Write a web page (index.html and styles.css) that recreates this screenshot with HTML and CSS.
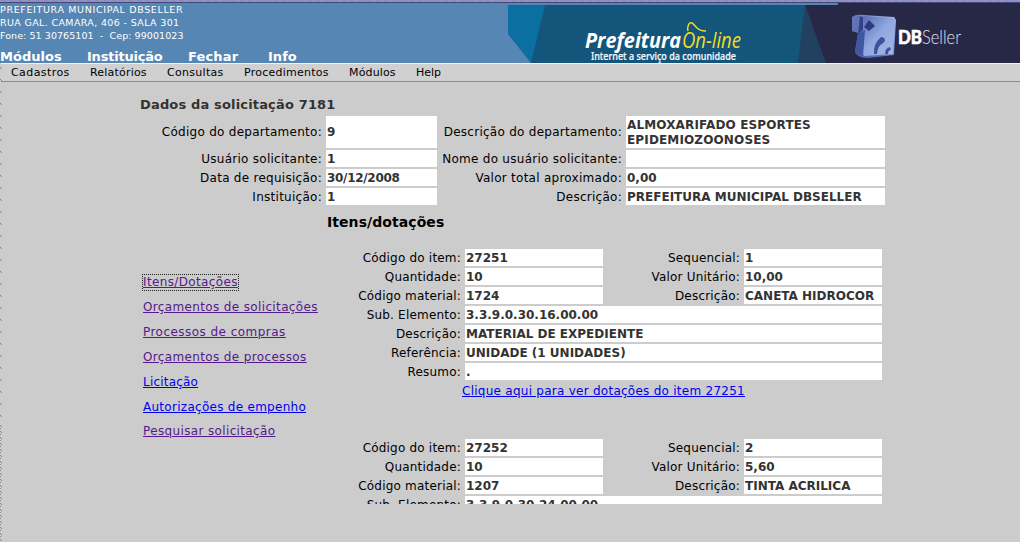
FILE: index.html
```html
<!DOCTYPE html>
<html lang="pt-BR">
<head>
<meta charset="utf-8">
<title>Prefeitura On-line</title>
<link rel="stylesheet" href="styles.css">
</head>
<body>
<header class="header">
  <div class="header-left">
    <div class="address">
      <div class="addr-name">PREFEITURA MUNICIPAL DBSELLER</div>
      <div class="addr-street">RUA GAL. CAMARA, 406 - SALA 301</div>
      <div class="addr-phone">Fone: 51 30765101 &nbsp;- &nbsp;Cep: 99001023</div>
    </div>
    <nav class="modules"><a>Módulos</a><a class="mod-inst">Instituição</a><a class="mod-close">Fechar</a><a>Info</a></nav>
  </div>
  <svg class="banner" width="512" height="60" viewBox="508 3 512 60">
    <defs>
      <linearGradient id="cube" x1="0" y1="1" x2="1" y2="0">
        <stop offset="0" stop-color="#465cab"/><stop offset=".4" stop-color="#5b78c6"/><stop offset="1" stop-color="#a9bce6"/>
      </linearGradient>
      <linearGradient id="cubeFace" x1="0" y1="0" x2="1" y2="1">
        <stop offset="0" stop-color="#5164ac"/><stop offset=".5" stop-color="#8fa8df"/><stop offset="1" stop-color="#aab7e5"/>
      </linearGradient>
    </defs>
    <rect x="508" y="5" width="330" height="58" fill="#14557c"/>
    <path d="M508 5V34L531 63L545 5Z" fill="#0b70a1"/>
    <path d="M508 34V63H531Z" fill="#5686b3"/>
    <path d="M838 3H1020V63H825L805 5H838Z" fill="#272746"/>
    <path d="M805 5L798 63H826Z" fill="#22405f"/>
    <text class="logo-bold" x="585" y="48" textLength="96" lengthAdjust="spacingAndGlyphs">Prefeitura</text>
    <text class="logo-thin" x="682" y="48" textLength="59" lengthAdjust="spacingAndGlyphs">On-line</text>
    <path d="M688 31C687 26 689 22 692 23C696 25 696 31 706 31" fill="none" stroke="#f0dd20" stroke-width="1.5"/>
    <text class="logo-tag" x="591" y="59.500" textLength="145" lengthAdjust="spacingAndGlyphs">Internet a serviço da comunidade</text>
    <path d="M852 17Q856 14 863 15L894 17L896 20L894 55L868 58Q858 58 855 52L858 33L852 31Z" fill="url(#cube)"/>
    <path d="M863 16L895 18L893 54L864 56L859 45L864 30Z" fill="url(#cubeFace)"/>
    <path d="M853 17L860 15V33L852 31Z" fill="#6273b4"/>
    <path d="M860 16L863 17V30L858 34Z" fill="#34418a"/>
    <path d="M858 34L865 30L863 56Q856 54 855 50Z" fill="#4056a0"/>
    <path d="M869 20L875 26L869 31L864 27Z" fill="#303980"/>
    <path d="M881 37Q885 37 885 41L882 44Q878 45 877 54L874 54Q873 44 881 37ZM885 54Q885 48 890 47L891 50Q888 50 888 54Z" fill="#3e529a"/>
    <text class="db" x="898" y="44" textLength="24" lengthAdjust="spacingAndGlyphs">DB</text>
    <text class="seller" x="922" y="44" textLength="39" lengthAdjust="spacingAndGlyphs">Seller</text>
  </svg>
  <svg class="top-edge" width="1020" height="3">
    <defs><pattern id="hatch" width="17" height="3" patternUnits="userSpaceOnUse"><rect width="17" height="3" fill="#8d93c7"/><path d="M2 0h2v1H2zM4 1h2v1H4zM10 0h2v1h-2zM12 1h2v1h-2z" fill="#8b8b9c"/></pattern></defs>
    <rect width="1020" height="2" fill="url(#hatch)"/><rect y="2" width="1020" height="1" fill="#45477c"/>
  </svg>
</header>
<nav class="menu"><a class="m1">Cadastros</a><a class="m2">Relatórios</a><a class="m3">Consultas</a><a class="m4">Procedimentos</a><a class="m5">Módulos</a><a>Help</a></nav>
<svg class="side-edge" width="3" height="478">
  <defs><pattern id="side" width="3" height="12" patternUnits="userSpaceOnUse"><path d="M0 3h1v1H0zM1 4h1v1H1z" fill="#858585"/></pattern>
  <pattern id="sideDense" width="3" height="6" patternUnits="userSpaceOnUse"><path d="M0 1h1v1H0zM1 2h1v1H1zM0 4h1v1H0z" fill="#858585"/></pattern></defs>
  <rect width="3" height="360" fill="url(#side)"/><rect y="360" width="3" height="118" fill="url(#sideDense)"/>
</svg>
<main class="page">
  <h1 class="title">Dados da solicitação 7181</h1>
  <section class="summary">
    <span class="label">Código do departamento:</span><b class="value">9</b>
    <span class="label">Descrição do departamento:</span><b class="value department">ALMOXARIFADO ESPORTES EPIDEMIOZOONOSES</b>
    <span class="label">Usuário solicitante:</span><b class="value">1</b>
    <span class="label">Nome do usuário solicitante:</span><b class="value"></b>
    <span class="label">Data de requisição:</span><b class="value date">30/12/2008</b>
    <span class="label">Valor total aproximado:</span><b class="value">0,00</b>
    <span class="label">Instituição:</span><b class="value">1</b>
    <span class="label">Descrição:</span><b class="value">PREFEITURA MUNICIPAL DBSELLER</b>
  </section>
  <div class="columns">
    <nav class="links">
      <a class="visited focused">Itens/Dotações</a>
      <a class="visited">Orçamentos de solicitações</a>
      <a class="visited purchases">Processos de compras</a>
      <a class="visited">Orçamentos de processos</a>
      <a class="bidding">Licitação</a>
      <a class="permits">Autorizações de empenho</a>
      <a class="visited">Pesquisar solicitação</a>
    </nav>
    <section class="items">
      <h2 class="subtitle">Itens/dotações</h2>
      <div class="item">
        <span class="label">Código do item:</span><b class="value">27251</b>
        <span class="label">Sequencial:</span><b class="value">1</b>
        <span class="label">Quantidade:</span><b class="value">10</b>
        <span class="label">Valor Unitário:</span><b class="value">10,00</b>
        <span class="label">Código material:</span><b class="value">1724</b>
        <span class="label">Descrição:</span><b class="value">CANETA HIDROCOR</b>
        <span class="label">Sub. Elemento:</span><b class="value wide">3.3.9.0.30.16.00.00</b>
        <span class="label">Descrição:</span><b class="value wide">MATERIAL DE EXPEDIENTE</b>
        <span class="label">Referência:</span><b class="value wide">UNIDADE (1 UNIDADES)</b>
        <span class="label">Resumo:</span><b class="value wide">.</b>
        <a class="detail">Clique aqui para ver dotações do item 27251</a>
      </div>
      <div class="item">
        <span class="label">Código do item:</span><b class="value">27252</b>
        <span class="label">Sequencial:</span><b class="value">2</b>
        <span class="label">Quantidade:</span><b class="value">10</b>
        <span class="label">Valor Unitário:</span><b class="value">5,60</b>
        <span class="label">Código material:</span><b class="value">1207</b>
        <span class="label">Descrição:</span><b class="value">TINTA ACRILICA</b>
        <span class="label">Sub. Elemento:</span><b class="value wide">3.3.9.0.30.24.00.00</b>
      </div>
    </section>
  </div>
</main>
</body>
</html>
```
FILE: styles.css
```css
* { box-sizing: border-box; }
body { margin: 0; width: 1020px; height: 542px; overflow: hidden; position: relative; background: #ccc; color: #000; font: 12px/15px "DejaVu Sans", sans-serif; }
.header { height: 63px; padding-top: 3px; display: flex; position: relative; background: #5686b3; color: #fff; }
.header-left { width: 508px; }
.banner { display: block; }
.top-edge { position: absolute; left: 0; top: 0; }
.side-edge { position: absolute; left: 0; top: 64px; }
.address { font-size: 9.5px; line-height: 13px; height: 45px; white-space: nowrap; }
.addr-name { letter-spacing: .65px; }
.addr-street { letter-spacing: .36px; }
.addr-phone { letter-spacing: .07px; }
.modules { display: flex; font-size: 13px; line-height: 17px; font-weight: bold; white-space: nowrap; }
.modules a { width: 87px; letter-spacing: .03px; }
.modules .mod-inst { width: 101px; letter-spacing: -.22px; }
.modules .mod-close { width: 80px; letter-spacing: .15px; }
.logo-bold { font: italic bold 22px "Open Sans", sans-serif; fill: #fff; }
.logo-thin { font: italic 22px "Open Sans", sans-serif; fill: #f0dd20; }
.logo-tag { font: 500 10px "Noto Sans", sans-serif; fill: #f4fafc; stroke: #f4fafc; stroke-width: .2px; }
.db { font: 900 18px Lato, sans-serif; fill: #fff; stroke: #fff; stroke-width: .5px; }
.seller { font: 300 19px Lato, sans-serif; fill: #e0e0ee; }
.menu { height: 19px; margin-left: 1px; padding-left: 10px; display: flex; border-top: 1px solid #f2f2f2; border-bottom: 1px solid #8c8c8c; background: #d0d0d0; font-size: 11px; line-height: 17px; }
.m1 { width: 79px; letter-spacing: .42px; }
.m2 { width: 77px; letter-spacing: .2px; }
.m3 { width: 77px; letter-spacing: .3px; }
.m4 { width: 105px; letter-spacing: .25px; }
.m5 { width: 67px; letter-spacing: .15px; }
.page { margin-left: 140px; padding-top: 14px; width: 745px; }
.title { margin: 0; height: 20px; font-size: 13px; line-height: 17px; letter-spacing: .16px; color: #333; }
.summary { display: grid; grid-template-columns: 184px 111px 185px 259px; grid-template-rows: 32px 17px 17px 17px; gap: 2px; }
.label { text-align: right; padding: 1px 2px 0 0; letter-spacing: .27px; white-space: nowrap; align-self: center; }
.value { background: #fff; color: #333; padding: 1px 0 0 1px; display: flex; align-items: center; min-width: 0; }
.department { letter-spacing: .14px; }
.date { letter-spacing: -.3px; }
.columns { display: flex; }
.links { width: 184px; padding: 70px 0 0 3px; display: flex; flex-direction: column; align-items: flex-start; gap: 10px; white-space: nowrap; }
.links a, .detail { color: #0000ee; text-decoration: underline; letter-spacing: .36px; }
.links .purchases { letter-spacing: .46px; }
.links .bidding { letter-spacing: .2px; }
.links .permits { letter-spacing: .28px; }
.links .visited { color: #551a8b; }
.links a:last-child { margin-top: -1px; }
.focused { outline: 1px dotted #222; }
.items { width: 561px; height: 299px; padding-left: 3px; overflow: hidden; }
.subtitle { margin: 0; height: 44px; padding-top: 8px; font-size: 14px; line-height: 18px; letter-spacing: .07px; }
.item { height: 190px; display: grid; grid-template-columns: 136px 138px 137px 138px; grid-auto-rows: 17px; gap: 2px; align-content: start; }
.item .label { letter-spacing: .2px; }
.wide { grid-column: 2 / 5; }
.detail { grid-column: 2 / 5; margin-left: -3px; justify-self: start; line-height: 18px; white-space: nowrap; }
.columns .detail { letter-spacing: .26px; }
```
